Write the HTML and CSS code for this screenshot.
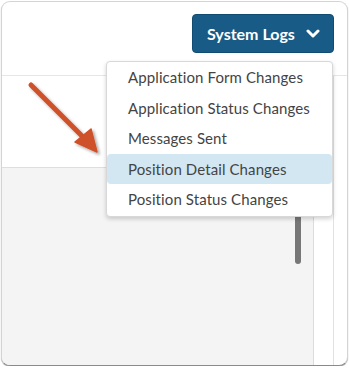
FILE: index.html
```html
<!DOCTYPE html>
<html>
<head>
<meta charset="utf-8">
<link rel="stylesheet" href="styles.css">
</head>
<body>
<div class="frame">
  <div class="top">
    <button class="logs-btn">System Logs
      <svg class="chev" width="14" height="10" viewBox="0 0 14 10"><path d="M2 2 L7 7 L12 2" fill="none" stroke="#fff" stroke-width="3" stroke-linecap="round" stroke-linejoin="round"/></svg>
    </button>
  </div>
  <div class="content">
    <div class="main">
      <div class="blank"></div>
      <div class="panel"></div>
    </div>
    <div class="side"></div>
    <div class="gutter"></div>
  </div>
  <div class="thumb"></div>
  <ul class="menu">
    <li class="item">Application Form Changes</li>
    <li class="item">Application Status Changes</li>
    <li class="item">Messages Sent</li>
    <li class="item active">Position Detail Changes</li>
    <li class="item">Position Status Changes</li>
  </ul>
  <svg class="arrow" width="120" height="170" viewBox="0 0 120 170">
    <defs>
      <filter id="sh" x="-20%" y="-20%" width="150%" height="150%">
        <feDropShadow dx="2" dy="2" stdDeviation="1.5" flood-color="#000" flood-opacity="0.35"/>
      </filter>
    </defs>
    <g filter="url(#sh)">
      <line x1="31" y1="85" x2="84" y2="138" stroke="#cf5129" stroke-width="5" stroke-linecap="round"/>
      <polygon points="75,142 91,129 97,152" fill="#cf5129" stroke="#cf5129" stroke-width="1.5" stroke-linejoin="round"/>
    </g>
  </svg>
</div>
</body>
</html>
```

FILE: styles.css
```css
* { box-sizing: border-box; }
html, body { margin: 0; padding: 0; background: #fff; }
body { font-family: "Lato", "Open Sans", sans-serif; }

.frame {
  position: relative;
  margin: 1px 0 0 1px;
  width: 347px;
  height: 365px;
  border: 1px solid #d4d4d4;
  border-bottom-color: #8a8a8a;
  border-radius: 9px;
  box-shadow: 0 1px 1px rgba(0,0,0,0.35);
  overflow: hidden;
  display: flex;
  flex-direction: column;
  background: #fff;
}

.top {
  height: 73px;
  display: flex;
  justify-content: flex-end;
  align-items: flex-start;
  padding: 12px 13px 0 0;
}

.logs-btn {
  width: 142px;
  height: 39px;
  border: 1px solid #114d73;
  border-radius: 4px;
  background: #175b86;
  color: #fff;
  font-family: "Lato", sans-serif;
  font-weight: 700;
  font-size: 16px;
  display: flex;
  align-items: center;
  justify-content: flex-start;
  padding: 0 0 0 14px;
  gap: 11px;
}
.chev { margin-top: 1px; }

.content {
  flex: 1;
  display: flex;
  border-top: 1px solid #e6e6e6;
}
.main {
  width: 312px;
  display: flex;
  flex-direction: column;
  border-right: 1px solid #dcdcdc;
}
.blank { height: 91px; }
.panel {
  flex: 1;
  background: #f4f4f4;
  border-top: 1px solid #dedede;
}
.side {
  width: 20px;
  border-right: 1px solid #e2e2e2;
}
.gutter { flex: 1; }

.thumb {
  position: absolute;
  left: 293px;
  top: 190px;
  width: 6px;
  height: 72px;
  border-radius: 3px;
  background: #777;
}

.menu {
  position: absolute;
  left: 104px;
  top: 59px;
  width: 227px;
  height: 156px;
  margin: 0;
  padding: 0;
  list-style: none;
  background: #fff;
  border: 1px solid #d8d8d8;
  border-radius: 4px;
  box-shadow: 0 2px 4px rgba(0,0,0,0.18);
}
.item {
  height: 30.6px;
  line-height: 30.6px;
  padding-left: 21px;
  font-size: 15px;
  color: #444;
  letter-spacing: 0.1px;
  white-space: nowrap;
}
.item.active {
  background: #d3e7f3;
  border-radius: 4px;
}

.arrow {
  position: absolute;
  left: -2px;
  top: -2px;
}
```
